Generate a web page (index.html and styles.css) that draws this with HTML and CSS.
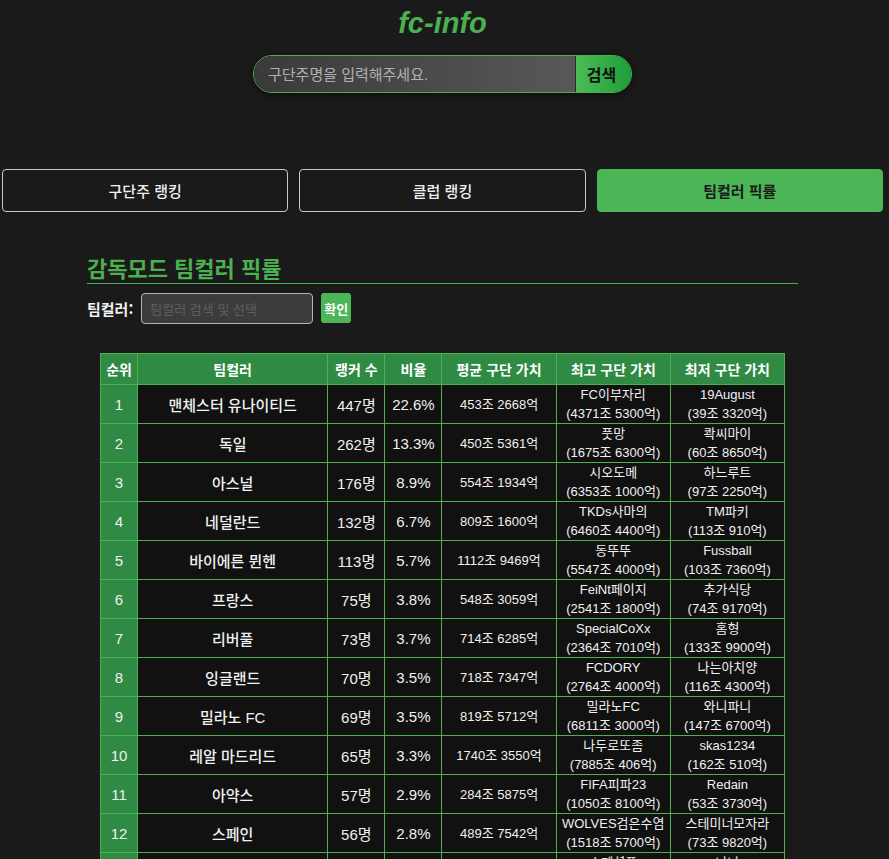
FILE: index.html
```html
<!DOCTYPE html>
<html lang="ko">
<head>
<meta charset="utf-8">
<title>fc-info</title>
<link rel="stylesheet" href="styles.css">
</head>
<body>
<header class="top">
  <h1 class="logo">fc-info</h1>
  <form class="search">
    <input class="search-input" type="text" placeholder="구단주명을 입력해주세요.">
    <button class="search-btn" type="button">검색</button>
  </form>
</header>
<nav class="tabs">
  <button class="tab" type="button">구단주 랭킹</button>
  <button class="tab" type="button">클럽 랭킹</button>
  <button class="tab active" type="button">팀컬러 픽률</button>
</nav>
<main class="content">
  <h2 class="section-title">감독모드 팀컬러 픽률</h2>
  <div class="filter">
    <label class="filter-label">팀컬러:</label>
    <input class="filter-input" type="text" placeholder="팀컬러 검색 및 선택">
    <button class="filter-btn" type="button">확인</button>
  </div>
  <table class="rank">
    <thead>
      <tr><th class="c-rank">순위</th><th class="c-team">팀컬러</th><th class="c-cnt">랭커 수</th><th class="c-pct">비율</th><th class="c-val">평균 구단 가치</th><th class="c-val">최고 구단 가치</th><th class="c-val">최저 구단 가치</th></tr>
    </thead>
    <tbody>
      <tr><td class="rank-no">1</td><td class="team">맨체스터 유나이티드</td><td class="num">447명</td><td class="num">22.6%</td><td class="small">453조 2668억</td><td class="small">FC이부자리<br>(4371조 5300억)</td><td class="small">19August<br>(39조 3320억)</td></tr>
      <tr><td class="rank-no">2</td><td class="team">독일</td><td class="num">262명</td><td class="num">13.3%</td><td class="small">450조 5361억</td><td class="small">풋망<br>(1675조 6300억)</td><td class="small">콱씨마이<br>(60조 8650억)</td></tr>
      <tr><td class="rank-no">3</td><td class="team">아스널</td><td class="num">176명</td><td class="num">8.9%</td><td class="small">554조 1934억</td><td class="small">시오도메<br>(6353조 1000억)</td><td class="small">하느루트<br>(97조 2250억)</td></tr>
      <tr><td class="rank-no">4</td><td class="team">네덜란드</td><td class="num">132명</td><td class="num">6.7%</td><td class="small">809조 1600억</td><td class="small">TKDs사마의<br>(6460조 4400억)</td><td class="small">TM파키<br>(113조 910억)</td></tr>
      <tr><td class="rank-no">5</td><td class="team">바이에른 뮌헨</td><td class="num">113명</td><td class="num">5.7%</td><td class="small">1112조 9469억</td><td class="small">동뚜뚜<br>(5547조 4000억)</td><td class="small">Fussball<br>(103조 7360억)</td></tr>
      <tr><td class="rank-no">6</td><td class="team">프랑스</td><td class="num">75명</td><td class="num">3.8%</td><td class="small">548조 3059억</td><td class="small">FeiNt페이지<br>(2541조 1800억)</td><td class="small">추가식당<br>(74조 9170억)</td></tr>
      <tr><td class="rank-no">7</td><td class="team">리버풀</td><td class="num">73명</td><td class="num">3.7%</td><td class="small">714조 6285억</td><td class="small">SpecialCoXx<br>(2364조 7010억)</td><td class="small">홈형<br>(133조 9900억)</td></tr>
      <tr><td class="rank-no">8</td><td class="team">잉글랜드</td><td class="num">70명</td><td class="num">3.5%</td><td class="small">718조 7347억</td><td class="small">FCDORY<br>(2764조 4000억)</td><td class="small">나는아치양<br>(116조 4300억)</td></tr>
      <tr><td class="rank-no">9</td><td class="team">밀라노 FC</td><td class="num">69명</td><td class="num">3.5%</td><td class="small">819조 5712억</td><td class="small">밀라노FC<br>(6811조 3000억)</td><td class="small">와니파니<br>(147조 6700억)</td></tr>
      <tr><td class="rank-no">10</td><td class="team">레알 마드리드</td><td class="num">65명</td><td class="num">3.3%</td><td class="small">1740조 3550억</td><td class="small">나두로또좀<br>(7885조 406억)</td><td class="small">skas1234<br>(162조 510억)</td></tr>
      <tr><td class="rank-no">11</td><td class="team">아약스</td><td class="num">57명</td><td class="num">2.9%</td><td class="small">284조 5875억</td><td class="small">FIFA피파23<br>(1050조 8100억)</td><td class="small">Redain<br>(53조 3730억)</td></tr>
      <tr><td class="rank-no">12</td><td class="team">스페인</td><td class="num">56명</td><td class="num">2.8%</td><td class="small">489조 7542억</td><td class="small">WOLVES검은수염<br>(1518조 5700억)</td><td class="small">스테미너모자라<br>(73조 9820억)</td></tr>
      <tr><td class="rank-no">13</td><td class="team">첼시</td><td class="num">52명</td><td class="num">2.6%</td><td class="small">612조 4418억</td><td class="small">스페셜포<br>(2210조 3400억)</td><td class="small">나나<br>(88조 1200억)</td></tr>
    </tbody>
  </table>
</main>
</body>
</html>
```

FILE: styles.css
```css
html, body {
  margin: 0;
  padding: 0;
  background: #1a1a1a;
  color: #eeeeee;
  font-family: "Liberation Sans", "Noto Sans CJK KR", Arial, sans-serif;
}

.top {
  display: flex;
  flex-direction: column;
  align-items: center;
  padding-top: 6px;
  padding-right: 4px;
}

.logo {
  margin: 0;
  font-size: 29px;
  line-height: 34px;
  font-style: italic;
  font-weight: bold;
  color: #4caf50;
}

.search {
  display: flex;
  margin-top: 15px;
  width: 379px;
  height: 38px;
  border-radius: 19px;
  border: 1px solid #4caf50;
  box-sizing: border-box;
  overflow: hidden;
  box-shadow: 0 2px 6px rgba(0, 0, 0, 0.5);
}

.search-input {
  flex: 1;
  min-width: 0;
  border: 0;
  outline: 0;
  padding: 0 0 0 14px;
  background: linear-gradient(90deg, #3a3a3a, #585858);
  color: #ddd;
  font-family: "Liberation Sans", "Noto Sans CJK KR", sans-serif;
  font-size: 15px;
}

.search-input::placeholder {
  color: #b0b0b0;
}

.search-btn {
  width: 56px;
  border: 0;
  border-left: 1px solid #2a2a2a;
  background: linear-gradient(90deg, #4cbc55, #1e9e3a);
  color: #111;
  font-family: "Noto Sans CJK KR", sans-serif;
  font-weight: bold;
  font-size: 16px;
  padding: 0 4px 0 0;
}

.tabs {
  display: flex;
  gap: 11px;
  padding: 0 6px 0 2px;
  margin-top: 76px;
}

.tab {
  flex: 1;
  height: 43px;
  border: 1px solid #c8c8c8;
  border-radius: 4px;
  background: #1a1a1a;
  color: #f0f0f0;
  font-family: "Noto Sans CJK KR", sans-serif;
  font-size: 15px;
  font-weight: 500;
}

.tab.active {
  background: #4cb556;
  border-color: #4cb556;
  color: #1a1a1a;
  font-weight: bold;
}

.content {
  width: 711px;
  margin: 0 0 0 87px;
  padding-top: 40px;
}

.section-title {
  margin: 0;
  font-family: "Noto Sans CJK KR", sans-serif;
  font-size: 22px;
  line-height: 30px;
  font-weight: bold;
  color: #4caf50;
  border-bottom: 1px solid #4caf50;
  padding-bottom: 1px;
}

.filter {
  display: flex;
  align-items: center;
  margin-top: 8px;
  height: 32px;
}

.filter-label {
  font-family: "Noto Sans CJK KR", sans-serif;
  font-weight: bold;
  font-size: 15px;
  color: #f0f0f0;
  margin-right: 8px;
}

.filter-input {
  width: 172px;
  height: 31px;
  box-sizing: border-box;
  border: 1px solid #b5b5b5;
  border-radius: 4px;
  background: #3c3c3c;
  padding: 0 8px;
  color: #ddd;
  font-family: "Noto Sans CJK KR", sans-serif;
  font-size: 13px;
}

.filter-input::placeholder {
  color: #5f5f5f;
}

.filter-btn {
  margin-left: 8px;
  width: 30px;
  height: 30px;
  padding: 0;
  border: 0;
  border-radius: 3px;
  background: #4cb556;
  color: #fff;
  font-family: "Noto Sans CJK KR", sans-serif;
  font-weight: bold;
  font-size: 13px;
}

.rank {
  margin: 29px auto 0;
  width: 685px;
  border-collapse: collapse;
  text-align: center;
}

.rank th,
.rank td {
  border: 1px solid #4caf50;
}

.rank th {
  background: #2f8a44;
  color: #fff;
  font-family: "Noto Sans CJK KR", sans-serif;
  font-size: 14px;
  font-weight: bold;
  height: 30px;
  padding: 0;
  line-height: 20px;
}

.c-rank { width: 36px; }
.c-team { width: 189px; }
.c-cnt { width: 56px; }
.c-pct { width: 56px; }
.c-val { width: 113px; }

.rank td {
  background: #111111;
  color: #f0f0f0;
  height: 38px;
  padding: 0 2px;
  box-sizing: border-box;
}

.rank td.rank-no {
  background: #2f8a44;
  font-size: 15px;
}

.rank td.team {
  font-size: 15px;
  font-weight: 500;
}

.rank td.num {
  font-size: 15px;
}

.rank td.small {
  font-size: 13px;
  line-height: 19px;
  padding: 0;
}
```
